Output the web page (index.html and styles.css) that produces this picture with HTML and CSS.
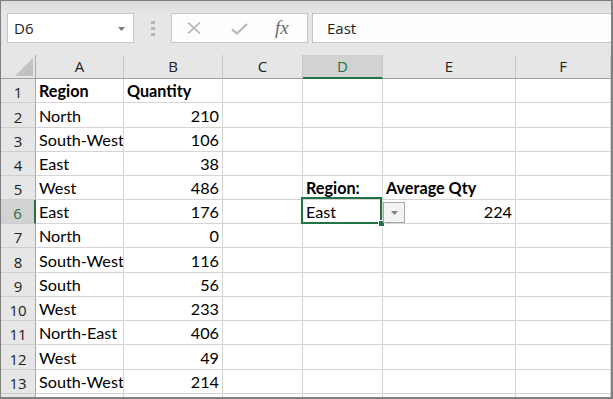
FILE: index.html
```html
<!DOCTYPE html>
<html lang="en">
<head>
    <meta charset="UTF-8">
    <meta name="viewport" content="width=device-width, initial-scale=1.0">
    <title>Average Qty - Book1</title>
    <link rel="stylesheet" href="styles.css">
</head>
<body>
    <div class="window">
        <!-- Name box + formula bar -->
        <div class="formula-bar">
            <div class="name-box">
                <span>D6</span>
                <svg class="caret" width="7" height="4" viewBox="0 0 7 4"><path d="M0 0h7L3.5 4z" fill="#7a7a7a"/></svg>
            </div>
            <div class="grip"><i></i><i></i><i></i></div>
            <div class="fx-buttons">
                <svg class="btn-cancel" width="14" height="12" viewBox="0 0 14 12"><path d="M1 0.5L13 11.5M13 0.5L1 11.5" stroke="#bdbdbd" stroke-width="1.8" fill="none"/></svg>
                <svg class="btn-enter" width="17" height="12" viewBox="0 0 17 12"><path d="M1 6.5L6 10.5L16 1" stroke="#bdbdbd" stroke-width="2.4" fill="none"/></svg>
                <span class="fx">fx</span>
            </div>
            <div class="formula-input">East</div>
        </div>

        <!-- Worksheet -->
        <div class="sheet">
            <div class="row head">
                <div class="cell corner"><span class="corner-mark"></span></div>
                <div class="cell col-head">A</div>
                <div class="cell col-head">B</div>
                <div class="cell col-head">C</div>
                <div class="cell col-head active">D</div>
                <div class="cell col-head">E</div>
                <div class="cell col-head">F</div>
            </div>
            <div class="row">
                <div class="cell row-head">1</div>
                <div class="cell bold">Region</div>
                <div class="cell bold">Quantity</div>
                <div class="cell"></div><div class="cell"></div><div class="cell"></div><div class="cell"></div>
            </div>
            <div class="row tall">
                <div class="cell row-head">2</div>
                <div class="cell">North</div>
                <div class="cell num">210</div>
                <div class="cell"></div><div class="cell"></div><div class="cell"></div><div class="cell"></div>
            </div>
            <div class="row">
                <div class="cell row-head">3</div>
                <div class="cell">South-West</div>
                <div class="cell num">106</div>
                <div class="cell"></div><div class="cell"></div><div class="cell"></div><div class="cell"></div>
            </div>
            <div class="row">
                <div class="cell row-head">4</div>
                <div class="cell">East</div>
                <div class="cell num">38</div>
                <div class="cell"></div><div class="cell"></div><div class="cell"></div><div class="cell"></div>
            </div>
            <div class="row">
                <div class="cell row-head">5</div>
                <div class="cell">West</div>
                <div class="cell num">486</div>
                <div class="cell"></div>
                <div class="cell bold">Region:</div>
                <div class="cell bold">Average Qty</div>
                <div class="cell"></div>
            </div>
            <div class="row">
                <div class="cell row-head active">6</div>
                <div class="cell">East</div>
                <div class="cell num">176</div>
                <div class="cell"></div>
                <div class="cell selected">East<span class="selection"><i class="fill-handle"></i></span></div>
                <div class="cell num has-list">
                    <span class="list-button"><svg width="7" height="4" viewBox="0 0 7 4"><path d="M0 0h7L3.5 4z" fill="#808080"/></svg></span>
                    224
                </div>
                <div class="cell"></div>
            </div>
            <div class="row">
                <div class="cell row-head">7</div>
                <div class="cell">North</div>
                <div class="cell num">0</div>
                <div class="cell"></div><div class="cell"></div><div class="cell"></div><div class="cell"></div>
            </div>
            <div class="row tall">
                <div class="cell row-head">8</div>
                <div class="cell">South-West</div>
                <div class="cell num">116</div>
                <div class="cell"></div><div class="cell"></div><div class="cell"></div><div class="cell"></div>
            </div>
            <div class="row">
                <div class="cell row-head">9</div>
                <div class="cell">South</div>
                <div class="cell num">56</div>
                <div class="cell"></div><div class="cell"></div><div class="cell"></div><div class="cell"></div>
            </div>
            <div class="row">
                <div class="cell row-head">10</div>
                <div class="cell">West</div>
                <div class="cell num">233</div>
                <div class="cell"></div><div class="cell"></div><div class="cell"></div><div class="cell"></div>
            </div>
            <div class="row">
                <div class="cell row-head">11</div>
                <div class="cell">North-East</div>
                <div class="cell num">406</div>
                <div class="cell"></div><div class="cell"></div><div class="cell"></div><div class="cell"></div>
            </div>
            <div class="row tall">
                <div class="cell row-head">12</div>
                <div class="cell">West</div>
                <div class="cell num">49</div>
                <div class="cell"></div><div class="cell"></div><div class="cell"></div><div class="cell"></div>
            </div>
            <div class="row">
                <div class="cell row-head">13</div>
                <div class="cell">South-West</div>
                <div class="cell num">214</div>
                <div class="cell"></div><div class="cell"></div><div class="cell"></div><div class="cell"></div>
            </div>
            <div class="row">
                <div class="cell row-head"></div>
                <div class="cell"></div><div class="cell"></div><div class="cell"></div>
                <div class="cell"></div><div class="cell"></div><div class="cell"></div>
            </div>
        </div>
    </div>
</body>
</html>
```

FILE: styles.css
```css
* {
    margin: 0;
    padding: 0;
    box-sizing: border-box;
}

body {
    width: 613px;
    height: 399px;
    overflow: hidden;
    background: #fff;
    font-family: "Open Sans", "Noto Sans", sans-serif;
    color: #222;
}

.window {
    width: 613px;
    height: 399px;
    border: 1px solid #7f7f7f;
    border-right-width: 2px;
    border-bottom-width: 2px;
    display: flex;
    flex-direction: column;
    overflow: hidden;
    background: #fff;
}

/* ---------- formula bar ---------- */

.formula-bar {
    flex: none;
    height: 54px;
    display: flex;
    align-items: flex-start;
    padding: 12px 0 0 6px;
    background: linear-gradient(#dadada, #e6e6e6 12px);
}

.name-box {
    width: 127px;
    height: 30px;
    background: #fff;
    border: 1px solid #c6c6c6;
    display: flex;
    align-items: center;
    justify-content: space-between;
    padding: 0 8px 1px 6px;
    font-size: 15px;
}

.name-box .caret {
    margin-top: 2px;
}

.grip {
    width: 4px;
    margin: 8px 16px 0 17px;
    display: flex;
    flex-direction: column;
    gap: 3px;
}

.grip i {
    display: block;
    width: 4px;
    height: 3px;
    background: #b5b5b5;
}

.fx-buttons {
    width: 137px;
    height: 30px;
    background: #fdfdfd;
    border: 1px solid #c6c6c6;
    display: flex;
    align-items: center;
}

.btn-cancel {
    margin-left: 15px;
}

.btn-enter {
    margin-left: 30px;
    margin-top: 1px;
}

.fx {
    margin-left: 27px;
    font-family: "Liberation Serif", "DejaVu Serif", serif;
    font-style: italic;
    font-size: 19px;
    color: #6b6b6b;
    line-height: 1;
    margin-top: -2px;
}

.formula-input {
    flex: 1;
    height: 30px;
    margin-left: 4px;
    background: #fdfdfd;
    border: 1px solid #c6c6c6;
    border-right: none;
    padding: 0 0 1px 14px;
    display: flex;
    align-items: center;
    font-size: 15px;
}

/* ---------- worksheet ---------- */

.sheet {
    flex: 1;
    overflow: hidden;
}

.row {
    display: grid;
    grid-template-columns: 35px 88px 99px 80px 80px 133px 95px;
    height: 24px;
}

.row.tall {
    height: 25px;
}

.cell {
    position: relative;
    border-right: 1px solid #d4d4d4;
    border-bottom: 1px solid #d4d4d4;
    padding: 0 3px 1px;
    display: flex;
    align-items: flex-end;
    white-space: nowrap;
    overflow: hidden;
    font-family: "Lato", "Liberation Sans", sans-serif;
    font-size: 16.2px;
    line-height: 20px;
    color: #000;
}

.cell.bold {
    font-weight: 700;
}

.cell.num {
    justify-content: flex-end;
}

.row.head .cell {
    background: #e6e6e6;
    border-right-color: #c6c6c6;
    border-bottom-color: #9f9f9f;
    justify-content: center;
    align-items: center;
    padding: 0 0 1px;
    font-family: "Open Sans", "Noto Sans", sans-serif;
    font-size: 15px;
    color: #222;
}

.row.head .corner {
    border-right-color: #a9a9a9;
    justify-content: flex-end;
    align-items: flex-end;
    padding: 0 2px 2px 0;
}

.corner-mark {
    width: 18px;
    height: 18px;
    background: #c2c2c2;
    clip-path: polygon(100% 0, 100% 100%, 0 100%);
}

.row.head .col-head.active {
    background: #d2d2d2;
    color: #217346;
    border-bottom: 2px solid #217346;
}

.cell.row-head {
    background: #e6e6e6;
    border-right-color: #a9a9a9;
    border-bottom-color: #cdcdcd;
    justify-content: center;
    align-items: center;
    padding: 3px 0 0;
    font-family: "Open Sans", "Noto Sans", sans-serif;
    font-size: 15px;
    color: #222;
}

.cell.row-head.active {
    background: #d2d2d2;
    color: #217346;
    border-right: 2px solid #217346;
}

/* active cell */
.cell.selected {
    overflow: visible;
    z-index: 2;
}

.selection {
    position: absolute;
    left: -2px;
    top: -3px;
    right: 0;
    bottom: -1px;
    border: 2px solid #217346;
}

.fill-handle {
    position: absolute;
    right: -5px;
    bottom: -5px;
    width: 7px;
    height: 7px;
    background: #217346;
    border: 1px solid #fff;
}

.cell.has-list {
    overflow: visible;
}

.list-button {
    position: absolute;
    left: 0;
    top: 2px;
    width: 22px;
    height: 21px;
    background: #f3f3f3;
    border: 1px solid #a8a8a8;
    display: flex;
    align-items: center;
    justify-content: center;
    z-index: 3;
}
```
